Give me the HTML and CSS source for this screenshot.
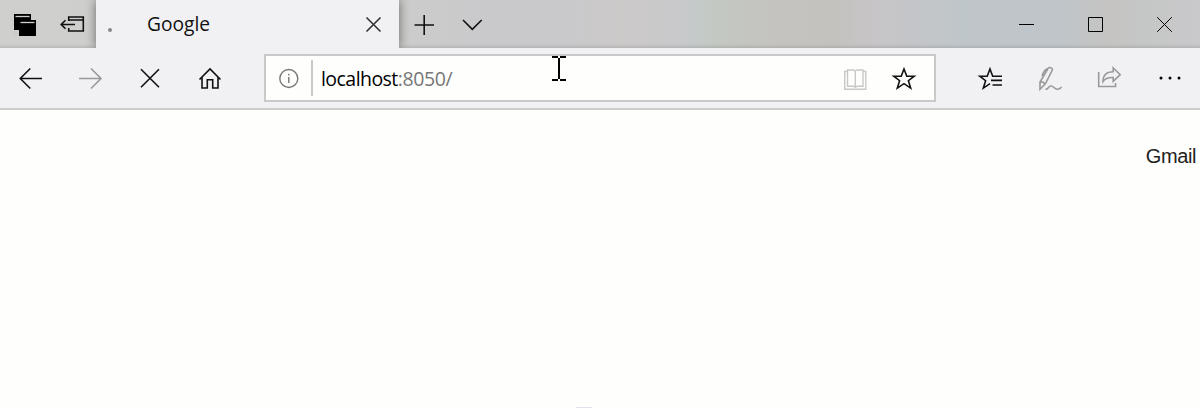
FILE: index.html
```html
<!DOCTYPE html>
<html lang="en">
<head>
<meta charset="utf-8">
<title>Google</title>
<link rel="stylesheet" href="styles.css">
</head>
<body>
<div class="browser">
  <header class="titlebar">
    <svg class="cap" viewBox="0 0 48 48"><path d="M14 14H31V30H14Z" fill="#000"/><path d="M15.5 16.5H29.5" stroke="#cfcfcd" stroke-width="1.3"/><path d="M14 30H18.5V36H14Z" fill="#ccccca"/><path d="M19 20H36V36H19Z" fill="#000"/><path d="M20.5 22.5H34.5" stroke="#cfcfcd" stroke-width="1.3"/></svg>
    <svg class="cap" viewBox="48 0 48 48"><path d="M68.7 21V17H83.3V31H68.7V28M68 20H83M61 24.5H75M65.5 20.2L61.2 24.5L65.5 28.8" class="line"/></svg>
    <div class="tab">
      <span class="loading"></span>
      <span class="tab-title">Google</span>
      <svg class="tab-close" viewBox="360 0 28 48"><path d="M366.5 17.5L380.5 31.5M380.5 17.5L366.5 31.5" class="line dim"/></svg>
    </div>
    <svg class="cap" viewBox="400 0 48 48"><path d="M414.5 25H434M424.2 15V35" class="line"/></svg>
    <svg class="cap" viewBox="448 0 48 48"><path d="M463 20L472.3 29.3L481.7 20" class="line"/></svg>
    <div class="window-buttons">
      <svg viewBox="992 0 69 48"><path d="M1019 24.5H1034" class="thin"/></svg>
      <svg viewBox="1061 0 69 48"><path d="M1088.5 17.5H1102.5V31.5H1088.5Z" class="thin"/></svg>
      <svg viewBox="1130 0 69 48"><path d="M1157.2 17.2L1171.8 31.8M1171.8 17.2L1157.2 31.8" class="thin"/></svg>
    </div>
  </header>
  <nav class="toolbar">
    <svg class="btn" viewBox="0 48 60 60"><path d="M42 78.5H20.5M30.3 68.5L20.3 78.5L30.3 88.5" class="line"/></svg>
    <svg class="btn" viewBox="60 48 60 60"><path d="M79 78.5H101M91 68.5L101 78.5L91 88.5" class="line gray"/></svg>
    <svg class="btn" viewBox="120 48 60 60"><path d="M141 69.2L159 87.2M159 69.2L141 87.2" class="line"/></svg>
    <svg class="btn" viewBox="180 48 60 60"><path d="M199.5 79.5L210 69L220.5 79.5M202 77.5V88H207.3V79.8H212.7V88H218V77.5" class="line"/></svg>
    <div class="address">
      <svg class="info" viewBox="266 56 45 44"><circle cx="288.8" cy="78.5" r="9" class="info-ring"/><path d="M288.8 77V83M288.8 73.8V75.4" class="info-ring"/></svg>
      <span class="divider"></span>
      <span class="url"><span class="host">localhost</span><span class="port">:8050/</span></span>
      <svg class="book" viewBox="838 56 34 44"><path d="M847.5 70H853.5L855.3 71L857 70H863V86.3H857L855.3 87.3L853.5 86.3H847.5ZM855.3 71V88M847.5 71.5H844.7V89.2H865.8V71.5H863" class="pale"/></svg>
      <svg class="star" viewBox="872 56 62 44"><path d="M904 69L906.8 76.2H914.2L908.4 80.7L910.7 88.1L904 83.7L897.3 88.1L899.6 80.7L893.8 76.2H901.2Z" class="line"/></svg>
    </div>
    <svg class="btn" viewBox="960 48 60 60"><path d="M1002 76.2H992.7L990 69L987.2 76.2H979.8L985.6 80.7L983.3 88.1L990 83.7M991 80.4H1002M992.5 85H1002" class="line"/></svg>
    <svg class="btn" viewBox="1020 48 60 60"><path d="M1040 89.2V82L1048 68.5C1048.8 66.8 1052.8 67.5 1052.3 70L1045.5 83.5L1040 89.2ZM1040.4 82.3C1042.5 81.5 1044.3 82.5 1044.7 84.2M1048 68.8C1044.8 69 1043 73 1042 75.8M1045.5 89C1048.5 90 1048 86 1051 86C1054 86 1054 89.2 1057.5 89.2C1060 89.2 1060 87.7 1061.8 87.2" class="line gray"/></svg>
    <svg class="btn" viewBox="1080 48 60 60"><path d="M1098.7 72V86.5H1115.5V83M1103 81.5C1103 75 1107 71.7 1113.2 71.7V67.8L1120.2 74.7L1113.2 81.3V77.5C1108 77.3 1105 78.5 1103 81.5Z" class="line gray"/></svg>
    <svg class="btn" viewBox="1140 48 60 60"><circle cx="1161" cy="78" r="1.5"/><circle cx="1170" cy="78" r="1.5"/><circle cx="1179" cy="78" r="1.5"/></svg>
    <svg class="cursor" viewBox="551 55 16 27"><path d="M552 57H558M560 57H566M559 58V79M552 80H558M560 80H566" class="ibeam"/></svg>
  </nav>
  <main class="page">
    <span class="gmail">Gmail</span>
    <span class="arc"></span>
  </main>
</div>
</body>
</html>
```
FILE: styles.css
```css
* { box-sizing: border-box; }
body { margin: 0; overflow: hidden; background: #fefefd; }
.browser { width: 1200px; height: 408px; display: flex; flex-direction: column; overflow: hidden; }
svg { display: block; flex: none; }
.titlebar {
  height: 48px;
  flex: none;
  display: flex;
  background:
    linear-gradient(to bottom, transparent 44px, rgba(0, 0, 0, .1) 48px),
    linear-gradient(to right, #cfcfcd 0, #cccccb 399px, #c9c9cc 500px, #c9c9cb 570px, #ccc9c9 620px, #c9c9cb 675px, #c4cac9 695px, #c3c8c1 720px, #c4c4c1 760px, #c4c3c0 780px, #c4c2bf 835px, #c7c5c8 880px, #bfc6c9 960px, #bfc5ca 1060px, #c5c4c2 1110px, #c5c6c6 1140px, #c9c9cb 1200px);
}
.cap { width: 48px; height: 48px; }
.tab {
  width: 303px;
  height: 48px;
  display: flex;
  align-items: center;
  background: #f1f1f4;
  box-shadow: 0 0 10px rgba(0, 0, 0, .5);
  clip-path: inset(0 -12px);
  margin-right: 1px;
}
.loading { width: 4px; height: 4px; margin: 11px 0 0 12px; border-radius: 50%; background: #888; }
.tab-title { margin: 0 0 0 35px; width: 217px; font: 19.2px/28px "Open Sans", sans-serif; color: #111; }
.tab-close { width: 28px; height: 48px; margin-left: -4px; }
.window-buttons { display: flex; margin-left: auto; margin-right: 1px; }
.window-buttons svg { width: 69px; height: 48px; }
.line { fill: none; stroke: #111; stroke-width: 1.6; }
.dim { stroke: #333; }
.gray { stroke: #999; }
.pale { fill: none; stroke: #c8c8c8; stroke-width: 1.4; }
.thin { fill: none; stroke: #000; stroke-width: 1; }
.toolbar {
  position: relative;
  height: 62px;
  flex: none;
  display: flex;
  background: #f1f1f4;
  border-bottom: 2px solid #cbcbcc;
}
.btn { width: 60px; height: 60px; }
.address {
  width: 672px;
  height: 48px;
  margin: 6px 24px 0;
  display: flex;
  align-items: center;
  background: #fefefd;
  border: 2px solid #c9c9c9;
}
.info { width: 45px; height: 44px; }
.info-ring { fill: none; stroke: #777; stroke-width: 1.4; }
.divider { width: 2px; height: 36px; background: #c9c9c9; }
.url { flex: 1; padding: 2px 0 0 8px; font: 19.5px/28px "Open Sans", sans-serif; color: #000; }
.host { letter-spacing: -.55px; }
.port { color: #777; letter-spacing: -.4px; }
.book { width: 34px; height: 44px; }
.star { width: 62px; height: 44px; }
.cursor { position: absolute; left: 551px; top: 7px; width: 16px; height: 27px; }
.ibeam { fill: none; stroke: #000; stroke-width: 2; }
.page {
  flex: 1;
  display: flex;
  flex-direction: column;
  justify-content: space-between;
  background: #fefefd;
}
.gmail { align-self: flex-end; margin: 34px 4px 0 0; font: 20px/24px "Liberation Sans", Arial, sans-serif; letter-spacing: -.4px; color: #222; }
.arc { width: 16px; height: 1px; margin-left: 576px; background: #e3e2ec; }
```
